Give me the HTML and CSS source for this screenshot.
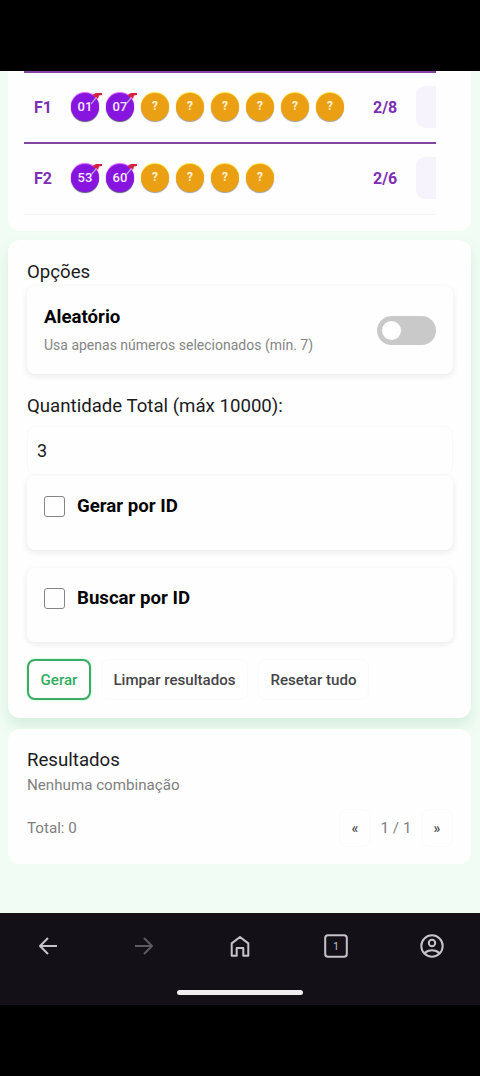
FILE: index.html
```html
<!DOCTYPE html>
<html lang="pt-BR">
<head>
<meta charset="utf-8">
<meta name="viewport" content="width=device-width">
<title>Gerador</title>
<link rel="stylesheet" href="styles.css">
</head>
<body>
<div class="status"></div>
<main class="page">
  <section class="card table-card">
    <div class="row">
      <span class="row-id">F1</span>
      <div class="balls">
        <span class="ball picked">01<svg class="pin" viewBox="0 0 12 12"><path d="M5 5L0 11" stroke="#b9a3d8" stroke-width="1.200"/><path d="M2 1.500l3-1.500h6v2l-3 .5-1 3.500-2-2-2 0z" fill="#d42240"/></svg></span>
        <span class="ball picked">07<svg class="pin" viewBox="0 0 12 12"><path d="M5 5L0 11" stroke="#b9a3d8" stroke-width="1.200"/><path d="M2 1.500l3-1.500h6v2l-3 .5-1 3.500-2-2-2 0z" fill="#d42240"/></svg></span>
        <span class="ball">?</span><span class="ball">?</span><span class="ball">?</span><span class="ball">?</span><span class="ball">?</span><span class="ball">?</span>
      </div>
      <span class="count">2/8</span>
      <span class="action"></span>
    </div>
    <div class="row last">
      <span class="row-id">F2</span>
      <div class="balls">
        <span class="ball picked">53<svg class="pin" viewBox="0 0 12 12"><path d="M5 5L0 11" stroke="#b9a3d8" stroke-width="1.200"/><path d="M2 1.500l3-1.500h6v2l-3 .5-1 3.500-2-2-2 0z" fill="#d42240"/></svg></span>
        <span class="ball picked">60<svg class="pin" viewBox="0 0 12 12"><path d="M5 5L0 11" stroke="#b9a3d8" stroke-width="1.200"/><path d="M2 1.500l3-1.500h6v2l-3 .5-1 3.500-2-2-2 0z" fill="#d42240"/></svg></span>
        <span class="ball">?</span><span class="ball">?</span><span class="ball">?</span><span class="ball">?</span>
      </div>
      <span class="count">2/6</span>
      <span class="action"></span>
    </div>
  </section>

  <section class="card options">
    <h2 class="heading">Opções</h2>
    <div class="panel random">
      <div>
        <div class="panel-title">Aleatório</div>
        <div class="hint">Usa apenas números selecionados (mín. 7)</div>
      </div>
      <span class="toggle"><span class="knob"></span></span>
    </div>
    <div class="label">Quantidade Total (máx 10000):</div>
    <div class="field">3</div>
    <div class="panel check"><span class="box"></span><span class="panel-title">Gerar por ID</span></div>
    <div class="panel check second"><span class="box"></span><span class="panel-title">Buscar por ID</span></div>
    <div class="buttons">
      <button class="btn primary">Gerar</button>
      <button class="btn clear">Limpar resultados</button>
      <button class="btn reset">Resetar tudo</button>
    </div>
  </section>

  <section class="card results">
    <h2 class="heading">Resultados</h2>
    <div class="muted">Nenhuma combinação</div>
    <div class="footer">
      <span class="muted">Total: 0</span>
      <div class="pager">
        <button class="page-btn">«</button>
        <span class="muted page-num">1 / 1</span>
        <button class="page-btn">»</button>
      </div>
    </div>
  </section>
</main>
<nav class="nav">
  <div class="icons">
    <svg class="icon" viewBox="0 0 24 24"><path d="M21 12H4M12 4l-8 8 8 8"/></svg>
    <svg class="icon dim" viewBox="0 0 24 24"><path d="M3 12h17M12 4l8 8-8 8"/></svg>
    <svg class="icon" viewBox="0 0 24 24"><path d="M3.700 9.400L12 3l8.300 6.400V21.800h-5V14h-6.600v7.800h-5z"/></svg>
    <svg class="icon" viewBox="0 0 24 24"><rect x="1.200" y="1.200" width="21.600" height="21.600" rx="2.800"/><text class="tab-count" x="12" y="15.700">1</text></svg>
    <svg class="icon" viewBox="0 0 24 24"><circle cx="12" cy="12" r="10.700"/><circle cx="12" cy="9" r="3.200"/><path d="M4.500 19.300c4-4 11-4 15 0"/></svg>
  </div>
  <div class="handle"></div>
</nav>
</body>
</html>
```
FILE: styles.css
```css
* { box-sizing: border-box; }
body {
  margin: 0;
  width: 480px;
  height: 1076px;
  background: #000;
  font-family: Roboto, sans-serif;
  color: #1b1b1d;
  overflow: hidden;
}
.status { height: 71px; }
.page {
  height: 842px;
  padding: 0 9px 0 8px;
  background: #f1fdf4;
}
.card { background: #fefefe; border-radius: 12px; }
.table-card {
  height: 160px;
  padding: 0 35px 0 16px;
  border-radius: 0 0 12px 12px;
}
.row {
  height: 71px;
  border-top: 2px solid #7f479f;
  display: flex;
  align-items: center;
  padding: 0 0 1px 10px;
  overflow: hidden;
}
.row.last { height: 73px; padding-bottom: 2px; border-bottom: 1px solid #f5f2f5; }
.row-id, .count {
  flex: none;
  font-size: 16px;
  font-weight: 700;
  color: #7c2fb4;
}
.row-id { width: 37px; }
.balls { flex: none; width: 302px; display: flex; gap: 7px; }
.ball {
  position: relative;
  width: 28px;
  height: 28px;
  flex: none;
  border-radius: 50%;
  background: #eb9f12;
  color: #fff3d7;
  font-size: 12px;
  font-weight: 700;
  line-height: 27px;
  text-align: center;
  box-shadow: 0 -1px 1px #ffe13a, 0 1px 1px #9f9d9b;
}
.ball.picked {
  background: #8715df;
  color: #f7eaff;
  font-size: 13px;
  font-weight: 500;
  box-shadow: 0 -1px 1px #d95cff, 0 1px 1px #5a4f78;
}
.pin { position: absolute; left: 20px; top: 0; width: 12px; height: 12px; fill: none; }
.count { width: 43px; }
.action { flex: none; width: 42px; height: 42px; border-radius: 9px; background: #f6f3fd; }
.options {
  height: 478px;
  margin-top: 9px;
  padding: 20px 18px 0 19px;
  box-shadow: 0 8px 14px rgba(30, 130, 80, .13);
}
.heading { margin: 0; font-size: 18.65px; font-weight: 400; line-height: 24px; }
.panel {
  background: #fefefe;
  border-radius: 8px;
  box-shadow: 0 2px 6px rgba(30, 20, 30, .09);
}
.random {
  height: 88px;
  margin-top: 2px;
  padding: 0 17px;
  display: flex;
  justify-content: space-between;
  align-items: center;
}
.panel-title { font-size: 18.65px; font-weight: 700; line-height: 24px; color: #050505; }
.hint { margin-top: 6px; font-size: 14px; line-height: 20px; color: #858585; }
.toggle { width: 59px; height: 29px; padding: 5px; border-radius: 15px; background: #c9c9c9; }
.knob { display: block; width: 19px; height: 19px; border-radius: 50%; background: #fff; }
.label { margin-top: 20px; font-size: 18.65px; line-height: 24px; }
.field {
  height: 49px;
  margin-top: 8px;
  padding-left: 9px;
  border: 1px solid #f9f9f9;
  border-radius: 8px;
  font-size: 18px;
  line-height: 47px;
}
.check {
  height: 74px;
  margin-top: 1px;
  padding: 18px 17px;
  display: flex;
  gap: 13px;
}
.box { width: 21px; height: 21px; margin: 2px -1px 0 0; border: 1px solid #858585; border-radius: 3px; }
.check.second { margin-top: 18px; }
.buttons { margin-top: 17px; display: flex; gap: 10px; }
.btn {
  height: 41px;
  padding: 0;
  border: 1px solid #f9fbfa;
  border-radius: 8px;
  background: #fefefe;
  font: 500 15.1px/20px Roboto, sans-serif;
  color: #454548;
}
.primary { width: 64px; border: 2px solid #3dab65; color: #31ac5d; box-shadow: 0 0 2px #7affb0; }
.clear { width: 147px; }
.reset { width: 111px; }
.results { height: 135px; margin-top: 11px; padding: 19px 18px 0 19px; }
.muted { font-size: 15.15px; line-height: 24px; color: #7e7e80; }
.results .heading { line-height: 25px; }
.footer { margin-top: 12px; display: flex; justify-content: space-between; align-items: center; }
.pager { display: flex; align-items: center; }
.page-btn {
  width: 32px;
  height: 38px;
  padding: 0;
  border: 1px solid #f9fbfa;
  border-radius: 8px;
  background: #fefefe;
  font: 500 14px/20px Roboto, sans-serif;
  color: #454548;
}
.page-num { width: 50px; text-align: center; }
.nav {
  height: 92px;
  padding-top: 21px;
  background: #131117;
}
.icons { display: grid; grid-template-columns: repeat(5, 96px); justify-items: center; }
.icon {
  width: 24px;
  height: 24px;
  fill: none;
  stroke: #c6c4ca;
  stroke-width: 2;
  stroke-linejoin: round;
}
.dim { stroke: #5d5b60; }
.tab-count {
  font: 10px Roboto, sans-serif;
  text-anchor: middle;
  fill: #c6c4ca;
  stroke: none;
}
.handle { width: 126px; height: 5px; margin: 32px auto 0; border-radius: 3px; background: #efedf2; }
```
